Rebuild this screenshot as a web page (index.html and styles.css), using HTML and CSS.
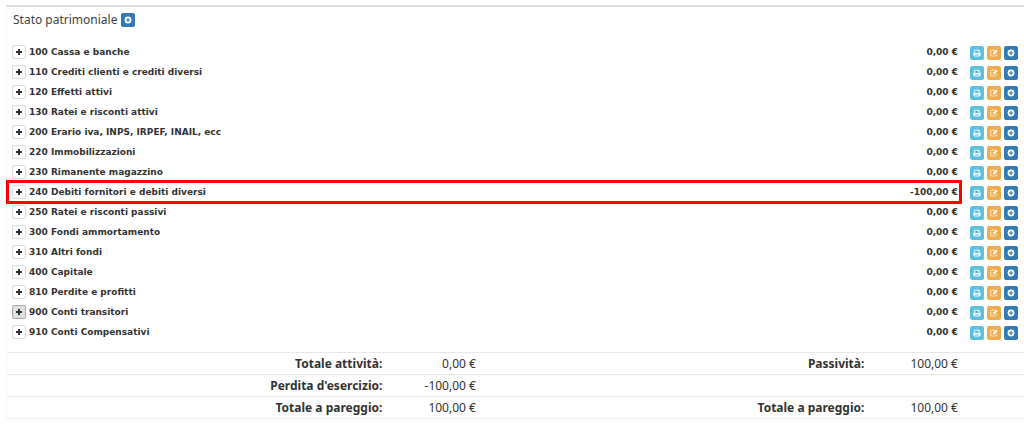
FILE: index.html
```
<!DOCTYPE html>
<html lang="it">
<head>
    <meta charset="UTF-8">
    <meta name="viewport" content="width=device-width, initial-scale=1.0">
    <title>Piano dei conti</title>
    <link rel="stylesheet" href="styles.css">
</head>
<body>
    <!-- Icons -->
    <svg class="sprite" aria-hidden="true">
        <symbol id="plus" viewBox="0 0 8 8">
            <path d="M3 1h2v2h2v2H5v2H3V5H1V3h2z"/>
        </symbol>
        <symbol id="plus-circle" viewBox="0 0 8 8">
            <path fill-rule="evenodd" d="M4 .6a3.4 3.4 0 1 1 0 6.8a3.4 3.4 0 0 1 0-6.8zM3.4 2v1.4H2v1.2h1.4V6h1.2V4.6H6V3.4H4.6V2z"/>
        </symbol>
        <symbol id="print" viewBox="0 0 8 8">
            <path fill-rule="evenodd" d="M1.3.8h4.4l1 1v1.8q1 0 1 .9v1.9h-1v1H1.3v-1h-1V4.5q0-.9 1-.9zM2.1 1.6v2.3h3.8V2.4H5V1.6zM2.1 5.6v1h3.8v-1z"/>
        </symbol>
        <symbol id="edit" viewBox="0 0 8 8">
            <path fill="none" stroke="currentColor" stroke-width=".7" d="M5 1.2H1.6q-.9 0-.9.9v4q0 .9.9.9h4q.9 0 .9-.9V4.8"/>
            <path d="M6.5.7l1.2 1.2L4.3 5.2H3V3.9z"/>
        </symbol>
    </svg>

    <section class="panel">
        <header class="panel-title">
            <h1>Stato patrimoniale</h1>
            <button type="button" class="btn primary" aria-label="Aggiungi"><svg><use href="#plus-circle"/></svg></button>
        </header>

        <table class="accounts">
            <tbody>
                <tr>
                    <td><button type="button" class="btn" aria-label="Espandi"><svg><use href="#plus"/></svg></button><b>100 Cassa e banche</b></td>
                    <td class="amount">0,00 €</td>
                    <td class="actions"><div><button type="button" class="btn info" aria-label="Stampa"><svg><use href="#print"/></svg></button><button type="button" class="btn warning" aria-label="Modifica"><svg><use href="#edit"/></svg></button><button type="button" class="btn primary" aria-label="Aggiungi"><svg><use href="#plus-circle"/></svg></button></div></td>
                </tr>
                <tr>
                    <td><button type="button" class="btn" aria-label="Espandi"><svg><use href="#plus"/></svg></button><b>110 Crediti clienti e crediti diversi</b></td>
                    <td class="amount">0,00 €</td>
                    <td class="actions"><div><button type="button" class="btn info" aria-label="Stampa"><svg><use href="#print"/></svg></button><button type="button" class="btn warning" aria-label="Modifica"><svg><use href="#edit"/></svg></button><button type="button" class="btn primary" aria-label="Aggiungi"><svg><use href="#plus-circle"/></svg></button></div></td>
                </tr>
                <tr>
                    <td><button type="button" class="btn" aria-label="Espandi"><svg><use href="#plus"/></svg></button><b>120 Effetti attivi</b></td>
                    <td class="amount">0,00 €</td>
                    <td class="actions"><div><button type="button" class="btn info" aria-label="Stampa"><svg><use href="#print"/></svg></button><button type="button" class="btn warning" aria-label="Modifica"><svg><use href="#edit"/></svg></button><button type="button" class="btn primary" aria-label="Aggiungi"><svg><use href="#plus-circle"/></svg></button></div></td>
                </tr>
                <tr>
                    <td><button type="button" class="btn" aria-label="Espandi"><svg><use href="#plus"/></svg></button><b>130 Ratei e risconti attivi</b></td>
                    <td class="amount">0,00 €</td>
                    <td class="actions"><div><button type="button" class="btn info" aria-label="Stampa"><svg><use href="#print"/></svg></button><button type="button" class="btn warning" aria-label="Modifica"><svg><use href="#edit"/></svg></button><button type="button" class="btn primary" aria-label="Aggiungi"><svg><use href="#plus-circle"/></svg></button></div></td>
                </tr>
                <tr>
                    <td><button type="button" class="btn" aria-label="Espandi"><svg><use href="#plus"/></svg></button><b>200 Erario iva, INPS, IRPEF, INAIL, ecc</b></td>
                    <td class="amount">0,00 €</td>
                    <td class="actions"><div><button type="button" class="btn info" aria-label="Stampa"><svg><use href="#print"/></svg></button><button type="button" class="btn warning" aria-label="Modifica"><svg><use href="#edit"/></svg></button><button type="button" class="btn primary" aria-label="Aggiungi"><svg><use href="#plus-circle"/></svg></button></div></td>
                </tr>
                <tr>
                    <td><button type="button" class="btn" aria-label="Espandi"><svg><use href="#plus"/></svg></button><b>220 Immobilizzazioni</b></td>
                    <td class="amount">0,00 €</td>
                    <td class="actions"><div><button type="button" class="btn info" aria-label="Stampa"><svg><use href="#print"/></svg></button><button type="button" class="btn warning" aria-label="Modifica"><svg><use href="#edit"/></svg></button><button type="button" class="btn primary" aria-label="Aggiungi"><svg><use href="#plus-circle"/></svg></button></div></td>
                </tr>
                <tr>
                    <td><button type="button" class="btn" aria-label="Espandi"><svg><use href="#plus"/></svg></button><b>230 Rimanente magazzino</b></td>
                    <td class="amount">0,00 €</td>
                    <td class="actions"><div><button type="button" class="btn info" aria-label="Stampa"><svg><use href="#print"/></svg></button><button type="button" class="btn warning" aria-label="Modifica"><svg><use href="#edit"/></svg></button><button type="button" class="btn primary" aria-label="Aggiungi"><svg><use href="#plus-circle"/></svg></button></div></td>
                </tr>
                <tr class="marked">
                    <td><button type="button" class="btn" aria-label="Espandi"><svg><use href="#plus"/></svg></button><b>240 Debiti fornitori e debiti diversi</b></td>
                    <td class="amount">-100,00 €</td>
                    <td class="actions"><div><button type="button" class="btn info" aria-label="Stampa"><svg><use href="#print"/></svg></button><button type="button" class="btn warning" aria-label="Modifica"><svg><use href="#edit"/></svg></button><button type="button" class="btn primary" aria-label="Aggiungi"><svg><use href="#plus-circle"/></svg></button></div></td>
                </tr>
                <tr>
                    <td><button type="button" class="btn" aria-label="Espandi"><svg><use href="#plus"/></svg></button><b>250 Ratei e risconti passivi</b></td>
                    <td class="amount">0,00 €</td>
                    <td class="actions"><div><button type="button" class="btn info" aria-label="Stampa"><svg><use href="#print"/></svg></button><button type="button" class="btn warning" aria-label="Modifica"><svg><use href="#edit"/></svg></button><button type="button" class="btn primary" aria-label="Aggiungi"><svg><use href="#plus-circle"/></svg></button></div></td>
                </tr>
                <tr>
                    <td><button type="button" class="btn" aria-label="Espandi"><svg><use href="#plus"/></svg></button><b>300 Fondi ammortamento</b></td>
                    <td class="amount">0,00 €</td>
                    <td class="actions"><div><button type="button" class="btn info" aria-label="Stampa"><svg><use href="#print"/></svg></button><button type="button" class="btn warning" aria-label="Modifica"><svg><use href="#edit"/></svg></button><button type="button" class="btn primary" aria-label="Aggiungi"><svg><use href="#plus-circle"/></svg></button></div></td>
                </tr>
                <tr>
                    <td><button type="button" class="btn" aria-label="Espandi"><svg><use href="#plus"/></svg></button><b>310 Altri fondi</b></td>
                    <td class="amount">0,00 €</td>
                    <td class="actions"><div><button type="button" class="btn info" aria-label="Stampa"><svg><use href="#print"/></svg></button><button type="button" class="btn warning" aria-label="Modifica"><svg><use href="#edit"/></svg></button><button type="button" class="btn primary" aria-label="Aggiungi"><svg><use href="#plus-circle"/></svg></button></div></td>
                </tr>
                <tr>
                    <td><button type="button" class="btn" aria-label="Espandi"><svg><use href="#plus"/></svg></button><b>400 Capitale</b></td>
                    <td class="amount">0,00 €</td>
                    <td class="actions"><div><button type="button" class="btn info" aria-label="Stampa"><svg><use href="#print"/></svg></button><button type="button" class="btn warning" aria-label="Modifica"><svg><use href="#edit"/></svg></button><button type="button" class="btn primary" aria-label="Aggiungi"><svg><use href="#plus-circle"/></svg></button></div></td>
                </tr>
                <tr>
                    <td><button type="button" class="btn" aria-label="Espandi"><svg><use href="#plus"/></svg></button><b>810 Perdite e profitti</b></td>
                    <td class="amount">0,00 €</td>
                    <td class="actions"><div><button type="button" class="btn info" aria-label="Stampa"><svg><use href="#print"/></svg></button><button type="button" class="btn warning" aria-label="Modifica"><svg><use href="#edit"/></svg></button><button type="button" class="btn primary" aria-label="Aggiungi"><svg><use href="#plus-circle"/></svg></button></div></td>
                </tr>
                <tr>
                    <td><button type="button" class="btn active" aria-label="Espandi"><svg><use href="#plus"/></svg></button><b>900 Conti transitori</b></td>
                    <td class="amount">0,00 €</td>
                    <td class="actions"><div><button type="button" class="btn info" aria-label="Stampa"><svg><use href="#print"/></svg></button><button type="button" class="btn warning" aria-label="Modifica"><svg><use href="#edit"/></svg></button><button type="button" class="btn primary" aria-label="Aggiungi"><svg><use href="#plus-circle"/></svg></button></div></td>
                </tr>
                <tr>
                    <td><button type="button" class="btn" aria-label="Espandi"><svg><use href="#plus"/></svg></button><b>910 Conti Compensativi</b></td>
                    <td class="amount">0,00 €</td>
                    <td class="actions"><div><button type="button" class="btn info" aria-label="Stampa"><svg><use href="#print"/></svg></button><button type="button" class="btn warning" aria-label="Modifica"><svg><use href="#edit"/></svg></button><button type="button" class="btn primary" aria-label="Aggiungi"><svg><use href="#plus-circle"/></svg></button></div></td>
                </tr>
            </tbody>
        </table>

        <!-- Totals -->
        <table class="totals">
            <colgroup>
                <col class="left-label">
                <col class="value">
                <col class="right-label">
                <col class="value">
                <col>
            </colgroup>
            <tbody>
                <tr>
                    <th>Totale attività:</th>
                    <td>0,00 €</td>
                    <th>Passività:</th>
                    <td>100,00 €</td>
                    <td></td>
                </tr>
                <tr>
                    <th>Perdita d'esercizio:</th>
                    <td>-100,00 €</td>
                    <td></td>
                    <td></td>
                    <td></td>
                </tr>
                <tr>
                    <th>Totale a pareggio:</th>
                    <td>100,00 €</td>
                    <th>Totale a pareggio:</th>
                    <td>100,00 €</td>
                    <td></td>
                </tr>
            </tbody>
        </table>
    </section>
</body>
</html>
```
FILE: styles.css
```
* {
    margin: 0;
    padding: 0;
    box-sizing: border-box;
}

body {
    font-family: "DejaVu Sans", sans-serif;
    font-size: 9px;
    background-color: #fff;
    color: #333;
}

.sprite {
    display: none;
}

.panel {
    margin: 5px 0 0 6px;
    border-top: 2px solid #d8dde0;
    border-left: 1px solid #f6f6f6;
}

.panel-title {
    display: flex;
    align-items: center;
    gap: 4px;
    height: 25px;
    padding-left: 6px;
}

.panel-title h1 {
    font-family: "Noto Sans", sans-serif;
    font-size: 12px;
    font-weight: normal;
    color: #444;
}

/* Buttons */
.btn {
    display: inline-flex;
    flex: none;
    align-items: center;
    justify-content: center;
    width: 14px;
    height: 14px;
    border: 1px solid #ddd;
    border-radius: 2px;
    background: #fff;
    color: #333;
    cursor: pointer;
}

.btn svg {
    width: 8px;
    height: 8px;
    fill: currentColor;
}

.btn.active {
    background: #e0e0e0;
    border-color: #aaa;
}

.btn.primary {
    background: #337ab7;
    border-color: #337ab7;
    color: #fff;
}

.btn.info {
    background: #5bc0de;
    border-color: #5bc0de;
    color: #fff;
}

.btn.warning {
    background: #f0ad4e;
    border-color: #f0ad4e;
    color: #fff;
}

/* Accounts */
.accounts {
    width: 100%;
    margin-top: 10px;
    border-collapse: collapse;
}

.accounts tr {
    position: relative;
    height: 20px;
}

.accounts td {
    padding-left: 5px;
    line-height: 14px;
    white-space: nowrap;
}

.accounts td .btn {
    vertical-align: middle;
}

.accounts b {
    padding-left: 3px;
}

.accounts .amount {
    text-align: right;
    font-weight: bold;
}

.accounts .actions {
    width: 66px;
    padding: 1px 6px 0 12px;
}

.actions div {
    display: flex;
    gap: 3px;
}

.accounts .marked::after {
    content: "";
    position: absolute;
    top: -2px;
    bottom: -2px;
    left: -1px;
    right: 62px;
    border: 3px solid #f00;
    pointer-events: none;
}

/* Totals */
.totals {
    width: 100%;
    margin-top: 10px;
    border-collapse: collapse;
    table-layout: fixed;
    font-family: "Noto Sans", sans-serif;
    font-size: 12px;
    line-height: 16px;
    border-bottom: 1px solid #eee;
}

.totals .left-label {
    width: 37.4%;
}

.totals .right-label {
    width: 38.2%;
}

.totals .value {
    width: 9.2%;
}

.totals tr {
    height: 22px;
    border-top: 1px solid #e8e8e8;
}

.totals th,
.totals td {
    padding-right: 5px;
    text-align: right;
    white-space: nowrap;
}
```
